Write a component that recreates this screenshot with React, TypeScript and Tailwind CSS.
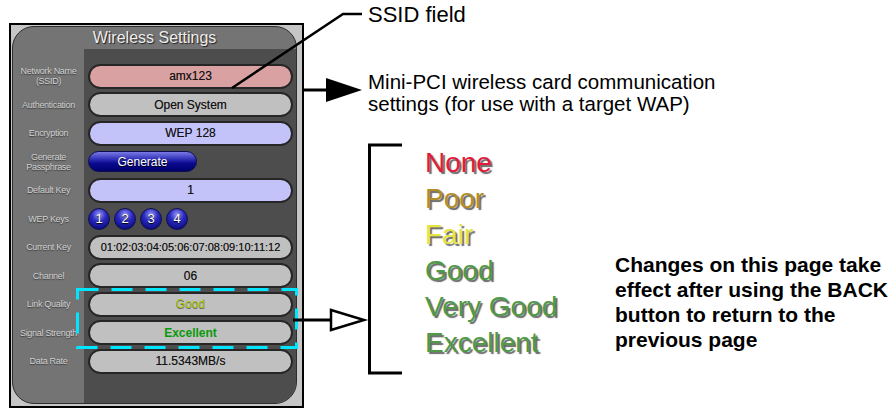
import type { ReactNode } from "react";

const labelShadow = "[text-shadow:0_1px_1px_#3a3a3a]";

interface IRow {
  label: ReactNode;
  body: ReactNode;
}

function Pill({
  children,
  tone,
  size = "text-[12px]",
}: {
  children: ReactNode;
  tone: string;
  size?: string;
}) {
  return (
    <div
      className={`h-[25px] w-full rounded-full border-2 border-[#262626] flex items-center justify-center text-[#141414] [text-shadow:0_0_0.2px_rgba(20,20,20,0.6)] ${size} ${tone}`}
    >
      {children}
    </div>
  );
}

function KeyBall({ n }: { n: number }) {
  return (
    <div className="w-[22px] h-[22px] rounded-full border border-[#10104a] bg-[radial-gradient(circle_at_50%_28%,#9a9af5_0%,#2a2ac0_40%,#00006a_100%)] flex items-center justify-center text-[13px] text-white [text-shadow:0_1px_1px_#000]">
      {n}
    </div>
  );
}

const rows: IRow[] = [
  {
    label: (
      <>
        Network Name
        <br />
        (SSID)
      </>
    ),
    body: <Pill tone="bg-[#d9a1a1]">amx123</Pill>,
  },
  { label: "Authentication", body: <Pill tone="bg-[#c0c0c0]">Open System</Pill> },
  { label: "Encryption", body: <Pill tone="bg-[#c3c3fa]">WEP 128</Pill> },
  {
    label: (
      <>
        Generate
        <br />
        Passphrase
      </>
    ),
    body: (
      <div className="h-[21px] w-[109px] rounded-full border border-[#0c0c50] bg-[linear-gradient(180deg,#7a7ae6_0%,#2c2cb4_40%,#0a0a90_60%,#00006e_100%)] flex items-center justify-center text-[12px] text-white [text-shadow:0_1px_1px_#000]">
        Generate
      </div>
    ),
  },
  { label: "Default Key", body: <Pill tone="bg-[#c3c3fa]">1</Pill> },
  {
    label: "WEP Keys",
    body: (
      <div className="flex gap-[4px]">
        {[1, 2, 3, 4].map((n) => (
          <KeyBall n={n} key={n} />
        ))}
      </div>
    ),
  },
  {
    label: "Current Key",
    body: (
      <Pill tone="bg-[#c0c0c0]" size="text-[11px]">
        01:02:03:04:05:06:07:08:09:10:11:12
      </Pill>
    ),
  },
  { label: "Channel", body: <Pill tone="bg-[#c0c0c0]">06</Pill> },
  {
    label: "Link Quality",
    body: (
      <Pill tone="bg-[#c0c0c0]">
        <span className="text-[#a6c400] [text-shadow:0_1px_0_#6a6a6a]">Good</span>
      </Pill>
    ),
  },
  {
    label: "Signal Strength",
    body: (
      <Pill tone="bg-[#c0c0c0]">
        <span className="text-[#0a9a0a] font-semibold [text-shadow:none]">Excellent</span>
      </Pill>
    ),
  },
  { label: "Data Rate", body: <Pill tone="bg-[#c0c0c0]">11.5343MB/s</Pill> },
];

const levels = [
  { name: "None", color: "text-[#e21c3a]" },
  { name: "Poor", color: "text-[#b38e28]" },
  { name: "Fair", color: "text-[#e6e440]" },
  { name: "Good", color: "text-[#4f9a46]" },
  { name: "Very Good", color: "text-[#4f9a46]" },
  { name: "Excellent", color: "text-[#4f9a46]" },
];

function WirelessPanel() {
  return (
    <div className="ml-[9px] mt-[23px] h-[385px] w-[295px] shrink-0 border-2 border-black bg-[#c6c6c6] pl-[1px] pt-[1px] pr-[5px]">
      <div className="h-[378px] w-[285px] rounded-[22px] border border-[#2e2e2e] bg-[#747474] overflow-hidden flex flex-col">
        {/* title */}
        <div className="h-[22px] shrink-0 text-center text-[16px] leading-[22px] text-[#ededed] [text-shadow:1px_1px_1px_#1e1e1e]">
          Wireless Settings
        </div>
        <div className="flex flex-1">
          {/* labels */}
          <div className="w-[71px] pt-[12.75px]">
            {rows.map((row, i) => (
              <div
                key={i}
                className={`h-[28.5px] flex items-center justify-center text-center text-[9px] leading-[10px] tracking-[-0.3px] text-[#d2d2d2] ${labelShadow}`}
              >
                <span>{row.label}</span>
              </div>
            ))}
          </div>
          {/* values */}
          <div className="flex-1 bg-[#4d4d4d] pt-[12.75px] pl-[4px] pr-[3px]">
            {rows.map((row, i) => (
              <div key={i} className="h-[28.5px] flex items-center">
                {row.body}
              </div>
            ))}
          </div>
        </div>
      </div>
    </div>
  );
}

function Callouts() {
  return (
    <svg
      className="absolute left-0 top-0 pointer-events-none"
      width={893}
      height={408}
      viewBox="0 0 893 408"
    >
      {/* SSID leader */}
      <polyline
        points="232,88 343,14 362,14"
        fill="none"
        stroke="#000"
        strokeWidth={2.5}
      />
      {/* filled arrow */}
      <line x1={303} y1={90} x2={330} y2={90} stroke="#000" strokeWidth={3} />
      <polygon points="326,78 362,90 326,102" fill="#000" />
      {/* dashed highlight */}
      <rect
        x={77.5}
        y={289.5}
        width={219}
        height={58}
        fill="none"
        stroke="#00e6ff"
        strokeWidth={3}
        strokeDasharray="21 13"
      />
      {/* hollow arrow */}
      <line x1={293} y1={320} x2={331} y2={320} stroke="#000" strokeWidth={3} />
      <polygon
        points="331,310 364,320 331,330"
        fill="#fff"
        stroke="#000"
        strokeWidth={2.5}
      />
      {/* bracket */}
      <polyline
        points="402,145 369.5,145 369.5,373 402,373"
        fill="none"
        stroke="#000"
        strokeWidth={3}
      />
    </svg>
  );
}

export default function App() {
  return (
    <div className="relative w-[893px] h-[408px] bg-white overflow-hidden flex font-['Liberation_Sans',Arial,sans-serif]">
      <WirelessPanel />

      <div className="flex-1 flex flex-col pl-[64px] text-black">
        <p className="mt-[3px] text-[22px] leading-[24px]">SSID field</p>
        <p className="mt-[44px] text-[20.5px] leading-[22px] whitespace-nowrap">
          Mini-PCI wireless card communication
          <br />
          settings (for use with a target WAP)
        </p>

        <div className="flex mt-[30px]">
          {/* quality levels */}
          <div className="ml-[57px] w-[150px]">
            {levels.map((lv) => (
              <p
                key={lv.name}
                className={`text-[28px] leading-[36px] whitespace-nowrap ${lv.color} [text-shadow:2px_2px_1px_rgba(40,40,40,0.7)]`}
              >
                {lv.name}
              </p>
            ))}
          </div>

          <p className="ml-[40px] mt-[107px] text-[21px] leading-[25px] font-bold whitespace-nowrap">
            Changes on this page take
            <br />
            effect after using the BACK
            <br />
            button to return to the
            <br />
            previous page
          </p>
        </div>
      </div>

      <Callouts />
    </div>
  );
}
